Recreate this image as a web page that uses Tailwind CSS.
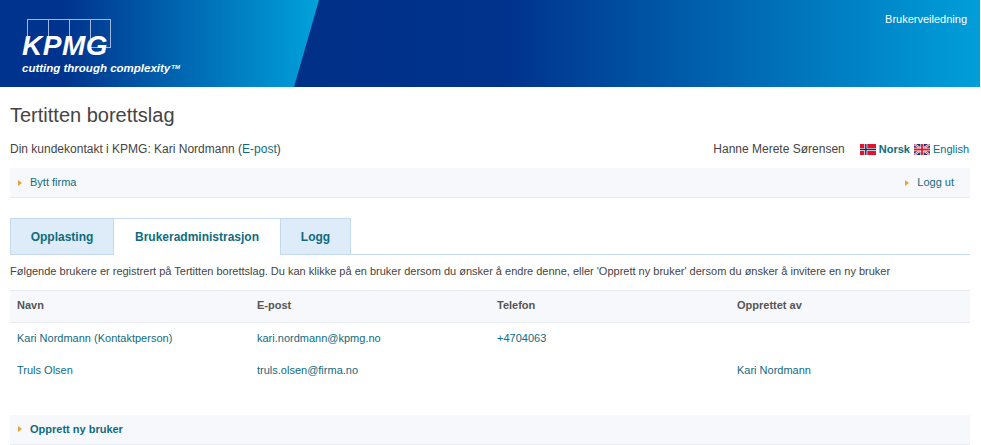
<!DOCTYPE html>
<html lang="en">
<head>
  <meta charset="UTF-8" />
  <title>Tertitten borettslag</title>
  <script src="https://cdn.jsdelivr.net/npm/@tailwindcss/browser@4"></script>
</head>
<body class="bg-white font-['Liberation_Sans',Arial,sans-serif] text-[11px] text-[#444] overflow-hidden">
  <!-- header -->
  <header class="relative w-[980px] h-[87px] bg-gradient-to-r from-[#002a80] via-[#00338d] via-[52%] to-[#009fda] overflow-hidden">
    <div class="absolute inset-y-0 left-0 w-[320px] bg-gradient-to-r from-[#00338d] from-[20%] to-[#00a3dc] [clip-path:polygon(0_0,319px_0,294px_100%,0_100%)]"></div>
    <div class="absolute left-[22px] top-[19px] w-[170px] text-white">
      <div class="flex items-start h-[29px] ml-[5px]">
        <span class="w-[22px] h-[18px] border border-b-0 border-[#9fb8e0] -mr-px"></span>
        <span class="w-[22px] h-[18px] border border-b-0 border-[#9fb8e0] -mr-px"></span>
        <span class="w-[22px] h-[18px] border border-b-0 border-[#9fb8e0] -mr-px"></span>
        <span class="w-[21px] h-[29px] border border-[#9fb8e0]"></span>
      </div>
      <div class="absolute left-0 top-[13px] text-[28px] leading-[28px] font-bold italic tracking-[0.5px]">KPMG</div>
      <div class="mt-[13px] text-[11.5px] leading-[14px] font-bold italic whitespace-nowrap">cutting through complexity<sup class="text-[6px] ml-px">TM</sup></div>
    </div>
    <a class="absolute right-[13px] top-[13px] text-[11px] leading-[13px] text-white">Brukerveiledning</a>
  </header>

  <main class="px-[10px] w-[980px]">
    <h1 class="mt-[17px] text-[20px] leading-[23px] text-[#444]">Tertitten borettslag</h1>

    <div class="mt-[15px] flex items-center justify-between h-[14px] text-[12px]">
      <p>Din kundekontakt i KPMG: Kari Nordmann (<a class="text-[#0f6b7f]">E-post</a>)</p>
      <div class="flex items-center">
        <span class="mr-[15px]">Hanne Merete Sørensen</span>
        <!-- NO flag -->
        <svg class="mr-[3px]" width="16" height="11" viewBox="0 0 22 16" preserveAspectRatio="none"><rect width="22" height="16" fill="#e0142c"/><path d="M8 0v16M0 8h22" stroke="#fff" stroke-width="4"/><path d="M8 0v16M0 8h22" stroke="#1a2f6b" stroke-width="2"/></svg>
        <a class="font-bold text-[#0f6b7f] text-[11px] mr-[4px]">Norsk</a>
        <!-- UK flag -->
        <svg class="mr-[3px]" width="16" height="11" viewBox="0 0 60 40" preserveAspectRatio="none"><rect width="60" height="40" fill="#1f2f78"/><path d="M0 0l60 40M60 0L0 40" stroke="#fff" stroke-width="8"/><path d="M0 0l60 40M60 0L0 40" stroke="#d81f30" stroke-width="3"/><path d="M30 0v40M0 20h60" stroke="#fff" stroke-width="12"/><path d="M30 0v40M0 20h60" stroke="#d81f30" stroke-width="7"/></svg>
        <a class="text-[#0f6b7f] text-[11px] mr-px">English</a>
      </div>
    </div>

    <nav class="mt-[12px] h-[30px] flex items-center justify-between bg-[#f7f8fb] border-b border-[#e8ebf2] text-[11px] text-[#0f6b7f]">
      <a class="flex items-center pl-[8px]"><span class="w-0 h-0 border-y-[3px] border-y-transparent border-l-[4px] border-l-[#e8a33d] mr-[8px]"></span>Bytt firma</a>
      <a class="flex items-center pr-[16px]"><span class="w-0 h-0 border-y-[3px] border-y-transparent border-l-[4px] border-l-[#e8a33d] mr-[8px]"></span>Logg ut</a>
    </nav>

    <div class="mt-[20px] flex h-[37px] border-b border-[#c5d9ec] text-[12px] font-bold text-[#0f6b7f]">
      <a class="w-[104px] h-[37px] flex items-center justify-center bg-[#deecf9] border border-[#c5d9ec]">Opplasting</a>
      <a class="w-[166px] h-[37px] flex items-center justify-center bg-white border-t border-[#c5d9ec]">Brukeradministrasjon</a>
      <a class="w-[71px] h-[37px] flex items-center justify-center bg-[#deecf9] border border-[#c5d9ec]">Logg</a>
    </div>

    <p class="mt-[10px] text-[11px] leading-[13px] whitespace-nowrap">Følgende brukere er registrert på Tertitten borettslag. Du kan klikke på en bruker dersom du ønsker å endre denne, eller 'Opprett ny bruker' dersom du ønsker å invitere en ny bruker</p>

    <table class="mt-[12px] w-[960px] table-fixed border-collapse text-[11px]">
      <thead>
        <tr class="h-[32px] bg-[#f7f8fb] border-y border-[#e8ebf2] text-left font-bold text-[#555]">
          <th class="w-[240px] pl-[7px] pb-[2px]">Navn</th>
          <th class="w-[240px] pl-[7px] pb-[2px]">E-post</th>
          <th class="w-[240px] pl-[7px] pb-[2px]">Telefon</th>
          <th class="w-[240px] pl-[7px] pb-[2px]">Opprettet av</th>
        </tr>
      </thead>
      <tbody class="text-[#0f6b7f]">
        <tr class="h-[32px]">
          <td class="pl-[7px] pb-[2px]">Kari Nordmann (Kontaktperson)</td>
          <td class="pl-[7px] pb-[2px]">kari.nordmann@kpmg.no</td>
          <td class="pl-[7px] pb-[2px]">+4704063</td>
          <td class="pl-[7px] pb-[2px]"></td>
        </tr>
        <tr class="h-[32px]">
          <td class="pl-[7px]">Truls Olsen</td>
          <td class="pl-[7px]">truls.olsen@firma.no</td>
          <td class="pl-[7px]"></td>
          <td class="pl-[7px]">Kari Nordmann</td>
        </tr>
      </tbody>
    </table>

    <div class="mt-[28px] h-[30px] flex items-center bg-[#f7f8fb] border-b border-[#e8ebf2] text-[11px] font-bold text-[#0f6b7f]">
      <a class="flex items-center pl-[8px]"><span class="w-0 h-0 border-y-[3px] border-y-transparent border-l-[4px] border-l-[#e8a33d] mr-[8px]"></span>Opprett ny bruker</a>
    </div>
  </main>
</body>
</html>
